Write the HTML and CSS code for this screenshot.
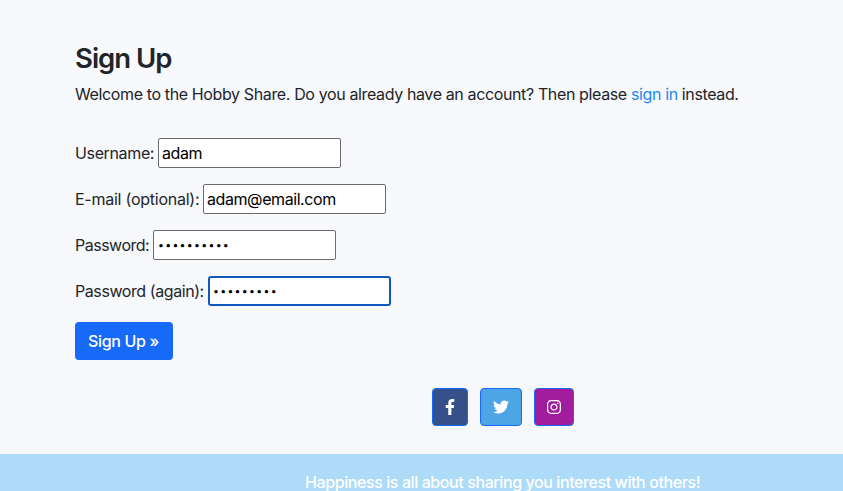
FILE: index.html
```html
<!DOCTYPE html>
<html lang="en">
<head>
<meta charset="utf-8">
<title>Sign Up</title>
<link rel="stylesheet" href="styles.css">
</head>
<body>
<main class="content">
  <h1>Sign Up</h1>
  <p class="intro">Welcome to the Hobby Share. Do you already have an account? Then please <a href="#">sign in</a> instead.</p>
  <form>
    <div class="field"><label class="label-username" for="u">Username:</label><input id="u" type="text" value="adam"></div>
    <div class="field"><label class="label-email" for="e">E-mail (optional):</label><input id="e" type="text" value="adam@email.com"></div>
    <div class="field"><label class="label-password">Password:</label><div class="box secret">••••••••••</div></div>
    <div class="field"><label class="label-again">Password (again):</label><div class="box secret focused">•••••••••</div></div>
    <button type="button" class="submit">Sign Up »</button>
  </form>
</main>
<nav class="social">
  <a class="btn facebook" href="#" aria-label="Facebook"><svg width="10" height="16" viewBox="0 0 320 512"><path d="M279.14 288l14.22-92.66h-88.91v-60.13c0-25.35 12.42-50.06 52.24-50.06h40.42V6.26S260.43 0 225.36 0c-73.22 0-121.08 44.38-121.08 124.72v70.62H22.89V288h81.39v224h100.17V288z"/></svg></a>
  <a class="btn twitter" href="#" aria-label="Twitter"><svg width="16" height="16" viewBox="0 0 512 512"><path d="M459.37 151.716c.325 4.548.325 9.097.325 13.645 0 138.72-105.583 298.558-298.558 298.558-59.452 0-114.68-17.219-161.137-47.106 8.447.974 16.568 1.299 25.34 1.299 49.055 0 94.213-16.568 130.274-44.832-46.132-.975-84.792-31.188-98.112-72.772 6.498.974 12.995 1.624 19.818 1.624 9.421 0 18.843-1.3 27.614-3.573-48.081-9.747-84.143-51.98-84.143-102.985v-1.299c13.969 7.797 30.214 12.67 47.431 13.319-28.264-18.843-46.781-51.005-46.781-87.391 0-19.492 5.197-37.36 14.294-52.954 51.655 63.675 129.3 105.258 216.365 109.807-1.624-7.797-2.599-15.918-2.599-24.04 0-57.828 46.782-104.934 104.934-104.934 30.213 0 57.502 12.67 76.67 33.137 23.715-4.548 46.456-13.32 66.599-25.34-7.798 24.366-24.366 44.833-46.132 57.827 21.117-2.273 41.584-8.122 60.426-16.243-14.292 20.791-32.161 39.308-52.628 54.253z"/></svg></a>
  <a class="btn instagram" href="#" aria-label="Instagram"><svg width="14" height="16" viewBox="0 0 448 512"><path d="M224.1 141c-63.6 0-114.9 51.3-114.9 114.9s51.3 114.9 114.9 114.9S339 319.5 339 255.9 287.7 141 224.1 141zm0 189.6c-41.1 0-74.7-33.5-74.7-74.7s33.5-74.7 74.7-74.7 74.7 33.5 74.7 74.7-33.6 74.7-74.7 74.7zm146.4-194.3c0 14.9-12 26.8-26.8 26.8-14.9 0-26.8-12-26.8-26.8s12-26.8 26.8-26.8 26.8 12 26.8 26.8zm76.1 27.2c-1.7-35.9-9.9-67.7-36.2-93.9-26.2-26.2-58-34.4-93.9-36.2-37-2.1-147.9-2.1-184.9 0-35.8 1.7-67.6 9.9-93.9 36.1s-34.4 58-36.2 93.9c-2.1 37-2.1 147.9 0 184.9 1.7 35.9 9.9 67.7 36.2 93.9s58 34.4 93.9 36.2c37 2.1 147.9 2.1 184.9 0 35.9-1.7 67.7-9.9 93.9-36.2 26.2-26.2 34.4-58 36.2-93.9 2.1-37 2.1-147.8 0-184.8zM398.8 388c-7.8 19.6-22.9 34.7-42.6 42.6-29.5 11.7-99.5 9-132.1 9s-102.7 2.6-132.1-9c-19.6-7.8-34.7-22.9-42.6-42.6-11.7-29.5-9-99.5-9-132.1s-2.6-102.7 9-132.1c7.8-19.6 22.9-34.7 42.6-42.6 29.5-11.7 99.5-9 132.1-9s102.7-2.6 132.1 9c19.6 7.8 34.7 22.9 42.6 42.6 11.7 29.5 9 99.5 9 132.1s2.7 102.7-9 132.1z"/></svg></a>
</nav>
<footer>Happiness is all about sharing you interest with others!</footer>
</body>
</html>
```
FILE: styles.css
```css
* { box-sizing: border-box; }
body { margin: 0; height: 491px; overflow: hidden; display: flex; flex-direction: column; background: linear-gradient(#f8f9fc, #f7f8fa); color: #212529; font: 16px/24px Inter, sans-serif; letter-spacing: -0.36px; }
.content { padding: 41px 0 0 75px; height: 388px; }
h1 { margin: 0 0 7px; font-size: 27.5px; line-height: 35px; height: 34px; font-weight: 600; letter-spacing: -1px; }
p { margin: 0 0 32px; letter-spacing: -0.373px; white-space: nowrap; }
a { color: #1a88f0; text-decoration: none; }
.field { display: flex; align-items: center; height: 30px; margin-bottom: 16px; white-space: nowrap; }
.label-username { width: 83px; }
.label-email { width: 128px; letter-spacing: -0.25px; }
.label-password { width: 78px; letter-spacing: -0.5px; }
.label-again { width: 133px; letter-spacing: -0.42px; }
input, .box { width: 183px; height: 30px; padding: 1px 3px; border: 1px solid #6b6b6b; border-radius: 2px; background: #fff; color: #000; font: inherit; letter-spacing: -0.42px; }
.box.secret { padding: 0 4px; line-height: 29px; font-size: 10.5px; letter-spacing: 1.3px; }
.box.focused { padding: 0 3px; line-height: 27px; border: 2px solid #1158be; border-radius: 3px; }
.submit { display: block; width: 98px; height: 38px; padding: 0 1px 0 0; border: 0; border-radius: 4px; background: #1769f8; color: #fff; font: inherit; font-weight: 450; letter-spacing: -0.35px; }
.social { display: flex; gap: 12px; margin-left: 432px; height: 66px; }
.btn { display: flex; align-items: center; justify-content: center; height: 38px; border: 1px solid #1769f8; border-radius: 4px; }
.btn svg { display: block; fill: #fff; }
.facebook { width: 36px; background: #365189; }
.twitter { width: 42px; background: #4da5e6; }
.instagram { width: 40px; background: #a11d9e; }
footer { height: 37px; padding: 16px 0 0 305px; background: #addbf8; color: #fff; font-weight: 450; letter-spacing: -0.41px; white-space: nowrap; }
```
